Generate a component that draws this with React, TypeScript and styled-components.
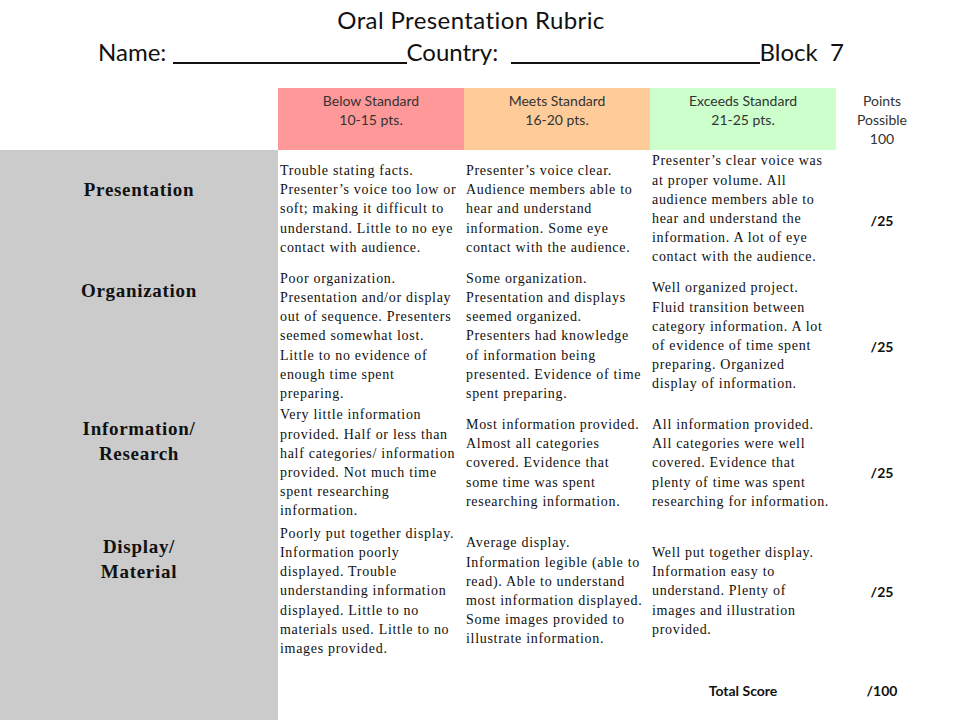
import React from "react";
import styled, { createGlobalStyle } from "styled-components";

const Global = createGlobalStyle`
  html, body { margin: 0; padding: 0; background: #ffffff; }
  body { width: 960px; height: 720px; overflow: hidden; }
`;

const Page = styled.div`
  width: 960px;
  height: 720px;
  display: flex;
  flex-direction: column;
  background: #ffffff;
`;

const TitleBlock = styled.header`
  padding-top: 4px;
  height: 84px;
  font-family: Lato, "Open Sans", sans-serif;
  font-size: 24px;
  line-height: 32px;
  color: #111;
  text-align: center;
  padding-right: 18px;
`;

const TitleLine = styled.div<{ $spread?: boolean }>`
  white-space: nowrap;
  letter-spacing: ${(p) => (p.$spread ? "0.4px" : "0")};
`;

const Blank = styled.span<{ $w: number }>`
  display: inline-block;
  width: ${(p) => p.$w}px;
  border-bottom: 2px solid #111;
  vertical-align: -3px;
`;

const Table = styled.div`
  display: grid;
  grid-template-columns: 278px 186px 186px 186px 92px 1fr;
  grid-template-rows: 62px 118px 136px 118px 138px 60px;
`;

const HeaderCell = styled.div<{ $bg: string }>`
  background: ${(p) => p.$bg};
  padding-top: 3px;
  font-family: Lato, "Open Sans", sans-serif;
  font-size: 14px;
  line-height: 19px;
  color: #333;
  text-align: center;
`;

const Empty = styled.div<{ $gray?: boolean }>`
  background: ${(p) => (p.$gray ? "#cbcbcb" : "#ffffff")};
`;

const LabelCell = styled.div<{ $top: number }>`
  background: #cbcbcb;
  padding-top: ${(p) => p.$top}px;
  font-family: "Liberation Serif", "Times New Roman", serif;
  font-weight: bold;
  font-size: 19px;
  letter-spacing: 0.7px;
  line-height: 25px;
  color: #111;
  text-align: center;
`;

const DescCell = styled.div`
  display: flex;
  flex-direction: column;
  justify-content: center;
  padding-left: 2px;
  font-family: "Liberation Serif", "Times New Roman", serif;
  font-size: 14px;
  letter-spacing: 0.7px;
  line-height: 19.2px;
  color: #111;
  overflow: visible;
`;

const DescLine = styled.span`
  display: block;
  white-space: nowrap;
`;

const ScoreCell = styled.div<{ $shift: number }>`
  display: flex;
  align-items: center;
  justify-content: center;
  padding-top: ${(p) => p.$shift * 2}px;
  font-family: Lato, "Open Sans", sans-serif;
  font-weight: bold;
  font-size: 14px;
  color: #111;
`;

type Row = {
  label: string[];
  top: number;
  shift: number;
  cols: string[][];
};

const rows: Row[] = [
  {
    label: ["Presentation"],
    top: 27,
    shift: 11,
    cols: [
      [
        "Trouble stating facts.",
        "Presenter’s voice too low or",
        "soft; making it difficult to",
        "understand. Little to no eye",
        "contact with audience.",
      ],
      [
        "Presenter’s voice clear.",
        "Audience members  able to",
        "hear and understand",
        "information.  Some eye",
        "contact with the audience.",
      ],
      [
        "Presenter’s clear voice was",
        "at proper volume.  All",
        "audience members  able to",
        "hear and understand the",
        "information. A lot of eye",
        "contact with the audience.",
      ],
    ],
  },
  {
    label: ["Organization"],
    top: 10,
    shift: 10,
    cols: [
      [
        "Poor organization.",
        "Presentation and/or display",
        "out of sequence. Presenters",
        "seemed somewhat lost.",
        "Little to no evidence of",
        "enough time spent",
        "preparing.",
      ],
      [
        "Some organization.",
        "Presentation and displays",
        "seemed organized.",
        "Presenters had knowledge",
        "of information being",
        "presented. Evidence of time",
        "spent preparing.",
      ],
      [
        "Well organized project.",
        "Fluid transition between",
        "category information. A lot",
        "of evidence of time spent",
        "preparing.  Organized",
        "display of information.",
      ],
    ],
  },
  {
    label: ["Information/", "Research"],
    top: 12,
    shift: 9,
    cols: [
      [
        "Very little information",
        "provided. Half or less than",
        "half categories/ information",
        "provided. Not much time",
        "spent researching",
        "information.",
      ],
      [
        "Most information provided.",
        "Almost all categories",
        "covered. Evidence that",
        "some time was spent",
        "researching  information.",
      ],
      [
        "All information provided.",
        "All categories  were well",
        "covered. Evidence that",
        "plenty of time was spent",
        "researching  for information.",
      ],
    ],
  },
  {
    label: ["Display/", "Material"],
    top: 12,
    shift: 0,
    cols: [
      [
        "Poorly put together display.",
        "Information poorly",
        "displayed. Trouble",
        "understanding information",
        "displayed. Little to no",
        "materials  used. Little to no",
        "images provided.",
      ],
      [
        "Average display.",
        "Information legible (able to",
        "read). Able to understand",
        "most information  displayed.",
        "Some images  provided to",
        "illustrate information.",
      ],
      [
        "Well put together display.",
        "Information easy to",
        "understand. Plenty of",
        "images  and illustration",
        "provided.",
      ],
    ],
  },
];

const headers = [
  { bg: "#ff9999", lines: ["Below Standard", "10-15 pts."] },
  { bg: "#ffcc99", lines: ["Meets Standard", "16-20 pts."] },
  { bg: "#ccffcc", lines: ["Exceeds Standard", "21-25 pts."] },
  { bg: "#ffffff", lines: ["Points", "Possible", "100"] },
];

export default function App() {
  return (
    <Page>
      <Global />
      <TitleBlock>
        <TitleLine $spread>Oral Presentation Rubric</TitleLine>
        <TitleLine>
          Name: <Blank $w={234} />Country:&nbsp;&nbsp;<Blank $w={249} />Block&nbsp; 7
        </TitleLine>
      </TitleBlock>
      <Table>
        <Empty />
        {headers.map((h) => (
          <HeaderCell key={h.lines[0]} $bg={h.bg}>
            {h.lines.map((l) => (
              <div key={l}>{l}</div>
            ))}
          </HeaderCell>
        ))}
        <Empty />
        {rows.map((r) => (
          <React.Fragment key={r.label[0]}>
            <LabelCell $top={r.top}>
              {r.label.map((l) => (
                <div key={l}>{l}</div>
              ))}
            </LabelCell>
            {r.cols.map((c, i) => (
              <DescCell key={i}>
                {c.map((l, j) => (
                  <DescLine key={j}>{l}</DescLine>
                ))}
              </DescCell>
            ))}
            <ScoreCell $shift={r.shift}>/25</ScoreCell>
            <Empty />
          </React.Fragment>
        ))}
        <Empty $gray />
        <Empty />
        <Empty />
        <ScoreCell $shift={0}>Total Score</ScoreCell>
        <ScoreCell $shift={0}>/100</ScoreCell>
        <Empty />
      </Table>
    </Page>
  );
}
